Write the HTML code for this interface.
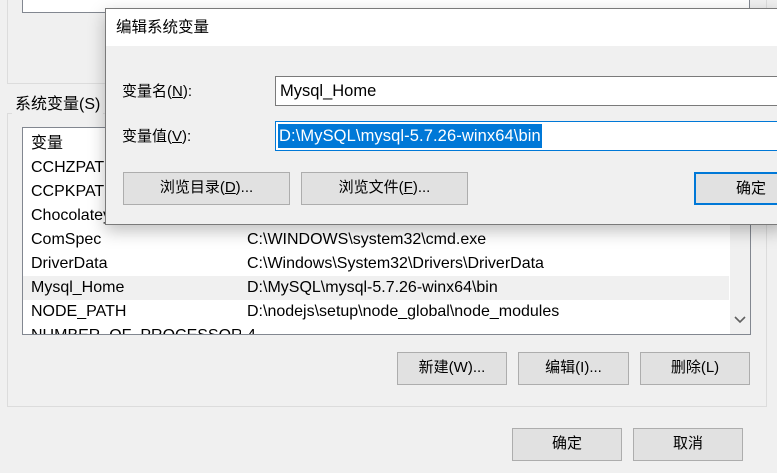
<!DOCTYPE html>
<html><head><meta charset="utf-8"><style>
*{margin:0;padding:0;box-sizing:border-box}
body{width:777px;height:473px;overflow:hidden;background:#f0f0f0;position:relative;font-family:"Liberation Sans","Noto Sans CJK SC",sans-serif;font-size:15px;color:#000}
.a{position:absolute}
.btn{position:absolute;background:#e1e1e1;border:1px solid #adadad;text-align:center;line-height:30px;font-size:15px}
.row{position:absolute;left:0;width:706px;height:24px;line-height:24px;font-size:16px}
.row span{position:absolute}
.row .c1{left:8px;width:210px;overflow:hidden;white-space:nowrap}.row .c2{left:224px}
u{text-decoration:underline}
</style></head><body>
<div class="a" style="left:7px;top:-2px;width:760px;height:86px;border:1px solid #dcdcdc"></div>
<div class="a" style="left:22px;top:-2px;width:728px;height:15px;background:#fff;border:1px solid #828790"></div>
<div class="a" style="left:7px;top:113px;width:760px;height:294px;border:1px solid #dcdcdc"></div>
<div class="a" style="left:12px;top:96px;background:#f0f0f0;padding:0 3px;line-height:18px;font-size:16px">系统变量(S)</div>
<div class="a" style="left:22px;top:127px;width:729px;height:208px;background:#fff;border:1px solid #828790;overflow:hidden">
 <div class="a" style="right:0;top:0;width:20px;height:206px;background:#f0f0f0"></div>
 <svg class="a" style="right:4px;top:188px" width="12" height="8"><path d="M1 1 L6 6 L11 1" stroke="#606060" stroke-width="1.6" fill="none"/></svg>
 <div class="row" style="top:4px"><span class="c1">变量</span></div>
 <div class="row" style="top:28px"><span class="c1">CCHZPATH</span></div>
 <div class="row" style="top:52px"><span class="c1">CCPKPATH</span></div>
 <div class="row" style="top:76px"><span class="c1">Chocolatey</span></div>
 <div class="row" style="top:100px"><span class="c1">ComSpec</span><span class="c2">C:\WINDOWS\system32\cmd.exe</span></div>
 <div class="row" style="top:124px"><span class="c1">DriverData</span><span class="c2">C:\Windows\System32\Drivers\DriverData</span></div>
 <div class="row" style="top:148px;background:#f0f0f0"><span class="c1">Mysql_Home</span><span class="c2">D:\MySQL\mysql-5.7.26-winx64\bin</span></div>
 <div class="row" style="top:172px"><span class="c1">NODE_PATH</span><span class="c2">D:\nodejs\setup\node_global\node_modules</span></div>
 <div class="row" style="top:196px"><span class="c1">NUMBER_OF_PROCESSORS</span><span class="c2">4</span></div>
</div>
<div class="btn" style="left:397px;top:352px;width:110px;height:33px">新建(W)...</div>
<div class="btn" style="left:518px;top:352px;width:111px;height:33px">编辑(I)...</div>
<div class="btn" style="left:640px;top:352px;width:110px;height:33px">删除(L)</div>
<div class="btn" style="left:512px;top:428px;width:110px;height:33px">确定</div>
<div class="btn" style="left:633px;top:428px;width:110px;height:33px">取消</div>
<div class="a" style="left:766px;top:0;width:1px;height:113px;background:#dcdcdc"></div>

<div class="a" style="left:105px;top:8px;width:680px;height:217px;background:#f0f0f0;border:1px solid #7a7a7a;box-shadow:0 6px 16px rgba(0,0,0,0.25)">
 <div class="a" style="left:0;top:0;width:100%;height:37px;background:#fff"></div>
 <div class="a" style="left:10px;top:9px;line-height:20px;font-size:15.5px">编辑系统变量</div>
 <div class="a" style="left:16px;top:73px;line-height:20px">变量名(<u>N</u>):</div>
 <div class="a" style="left:169px;top:67px;width:520px;height:30px;background:#fff;border:1px solid #7a7a7a;padding:3px 4px;line-height:22px;font-size:16.5px">Mysql_Home</div>
 <div class="a" style="left:16px;top:118px;line-height:20px">变量值(<u>V</u>):</div>
 <div class="a" style="left:169px;top:112px;width:520px;height:30px;background:#fff;border:1px solid #0078d7;padding:2px 2px"><span style="display:inline-block;background:#0078d7;color:#fff;line-height:24px;padding:0 1px;font-size:16.5px;letter-spacing:0.1px">D:\MySQL\mysql-5.7.26-winx64\bin</span></div>
 <div class="btn" style="left:17px;top:163px;width:167px;height:33px">浏览目录(<u>D</u>)...</div>
 <div class="btn" style="left:195px;top:163px;width:167px;height:33px">浏览文件(<u>F</u>)...</div>
 <div class="btn" style="left:588px;top:163px;width:100px;height:33px;border:2px solid #0078d7;line-height:29px;text-align:left;padding-left:40px">确定</div>
</div>
</body></html>
